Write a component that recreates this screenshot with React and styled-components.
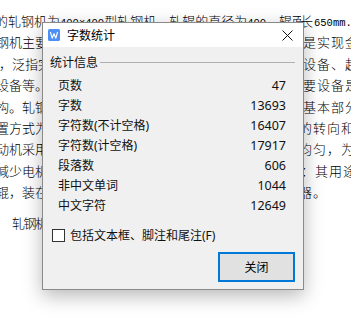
import styled, {createGlobalStyle} from "styled-components";

const GlobalStyle = createGlobalStyle`
  html, body {
    margin: 0;
    padding: 0;
    background: #fff;
    overflow: hidden;
  }
  * {
    box-sizing: border-box;
  }
`

// only the parts of the page that peek out around the dialog
const docLines = [
  {left: "钢机主要", right: "是实现金属", shift: -4},
  {left: "，泛指完成", right: "设备、起重", shift: -1},
  {left: "设备等。但", right: "要设备是", shift: -4},
  {left: "构。轧钢", right: "基本部分", shift: -4},
  {left: "置方式为", right: "的转向和转", shift: -4, rshift: -4},
  {left: "动机采用", right: "均匀，为", shift: -4, rshift: -4},
  {left: "减少电机", right: "：其用途是", shift: -4, rshift: -2},
  {left: "辊，装在", right: "器。", shift: -4, rshift: -4},
]

const stats = [
  ["页数", "47"],
  ["字数", "13693"],
  ["字符数(不计空格)", "16407"],
  ["字符数(计空格)", "17917"],
  ["段落数", "606"],
  ["非中文单词", "1044"],
  ["中文字符", "12649"],
]

function WpsIcon(){
  return (
    <svg width="12" height="12" viewBox="0 0 12 12">
      <rect x="0" y="0" width="12" height="12" rx="1.5" fill="#4d8ff5"/>
      <polyline points="2.4,3 4.2,9.2 6,4.6 7.8,9.2 9.6,3" fill="none" stroke="#fff" strokeWidth="1.1" strokeLinejoin="round"/>
    </svg>
  )
}

function CloseIcon(){
  return (
    <svg width="11" height="11" viewBox="0 0 11 11">
      <line x1="0.5" y1="0.5" x2="10.5" y2="10.5" stroke="#111" strokeWidth="1"/>
      <line x1="10.5" y1="0.5" x2="0.5" y2="10.5" stroke="#111" strokeWidth="1"/>
    </svg>
  )
}

export default function App(){
  return (
    <Page>
      <GlobalStyle/>
      <Doc>
        <FirstLine>
          <LeftWide>
            <Shifted $shift={-5}>的轧钢机为<Mono>400×400</Mono>型轧钢机，轧辊的直径为<Mono>400</Mono>，辊面</Shifted>
          </LeftWide>
          <RightCell $shift={-1}>长<Mono>650mm.3</Mono></RightCell>
        </FirstLine>
        {docLines.map((l, i) => (
          <DocLine key={i}>
            <LeftCell><Shifted $shift={l.shift}>{l.left}</Shifted></LeftCell>
            <span/>
            <RightCell $shift={l.rshift || 0}>{l.right}</RightCell>
          </DocLine>
        ))}
        <Paragraph>轧钢机</Paragraph>
      </Doc>

      <Dialog>
        <TitleBar>
          <WpsIcon/>
          <Title>字数统计</Title>
          <CloseBtn><CloseIcon/></CloseBtn>
        </TitleBar>
        <Body>
          <GroupHeader>
            <span>统计信息</span>
            <GroupLine/>
          </GroupHeader>
          <StatList>
            {stats.map(([k, v]) => (
              <StatRow key={k}>
                <span>{k}</span>
                <StatValue>{v}</StatValue>
              </StatRow>
            ))}
          </StatList>
          <CheckRow>
            <CheckBox/>
            <span>包括文本框、脚注和尾注(F)</span>
          </CheckRow>
          <Footer>
            <Button>关闭</Button>
          </Footer>
        </Body>
      </Dialog>
    </Page>
  )
}

const Page = styled.div`
  position: relative;
  width: 351px;
  height: 328px;
  overflow: hidden;
  background: #fff;
`

const Doc = styled.div`
  padding-top: 10px;
  font-family: "Noto Sans CJK SC", sans-serif;
  font-size: 13px;
  font-weight: 300;
  color: #000;
`

const FirstLine = styled.div`
  display: grid;
  grid-template-columns: 301px 1fr;
  height: 21.4px;
  line-height: 21.4px;
  white-space: nowrap;
`

const DocLine = styled.div`
  display: grid;
  grid-template-columns: 42px 261px 1fr;
  height: 21.4px;
  line-height: 21.4px;
  white-space: nowrap;
`

const LeftWide = styled.div`
  overflow: hidden;
`

const LeftCell = styled.div`
  overflow: hidden;
`

const Shifted = styled.span`
  display: inline-block;
  margin-left: ${p => p.$shift}px;
`

const RightCell = styled.div`
  overflow: hidden;
  letter-spacing: 1px;
  text-indent: ${p => p.$shift}px;
`

const Mono = styled.span`
  font-family: "Liberation Mono", monospace;
  font-size: 10.5px;
  letter-spacing: 0;
`

const Paragraph = styled.div`
  margin-top: 9px;
  padding-left: 12px;
  width: 42px;
  white-space: nowrap;
  overflow: hidden;
  letter-spacing: -1.5px;
  line-height: 21.4px;
`

const Dialog = styled.div`
  position: absolute;
  left: 42px;
  top: 22px;
  width: 262px;
  height: 268px;
  border: 1px solid #8a8a8a;
  background: #f0f0f0;
  box-shadow: 0 6px 18px rgba(0, 0, 0, 0.28);
  font-family: "Noto Sans", "Noto Sans CJK SC", sans-serif;
  font-size: 12px;
  color: #111;
  display: flex;
  flex-direction: column;
`

const TitleBar = styled.div`
  height: 24px;
  background: #fff;
  display: flex;
  align-items: center;
  padding: 0 10px 0 5px;
  & svg {
    flex: none;
  }
`

const Title = styled.div`
  margin-left: 7px;
  font-size: 12px;
  color: #000;
  flex: 1;
`

const CloseBtn = styled.div`
  display: flex;
  align-items: center;
`

const Body = styled.div`
  flex: 1;
  display: flex;
  flex-direction: column;
  padding: 7px 8px 7px 7px;
`

const GroupHeader = styled.div`
  display: flex;
  align-items: center;
  height: 16px;
  gap: 2px;
`

const GroupLine = styled.div`
  flex: 1;
  height: 1px;
  background: #b0b0b0;
`

const StatList = styled.div`
  margin-top: 5px;
  padding: 0 9px 0 8px;
`

const StatRow = styled.div`
  display: flex;
  justify-content: space-between;
  align-items: center;
  height: 20px;
`

const StatValue = styled.span`
  font-size: 12.5px;
`

const CheckRow = styled.div`
  margin-top: 12px;
  padding-left: 2px;
  display: flex;
  align-items: center;
  gap: 5px;
  height: 16px;
`

const CheckBox = styled.div`
  width: 13px;
  height: 13px;
  border: 1px solid #333;
  background: #fff;
`

const Footer = styled.div`
  margin-top: auto;
  display: flex;
  justify-content: flex-end;
`

const Button = styled.div`
  width: 77px;
  height: 30px;
  border: 2px solid #0078d7;
  background: #e1e1e1;
  display: flex;
  align-items: center;
  justify-content: center;
  font-size: 12px;
  color: #000;
`
